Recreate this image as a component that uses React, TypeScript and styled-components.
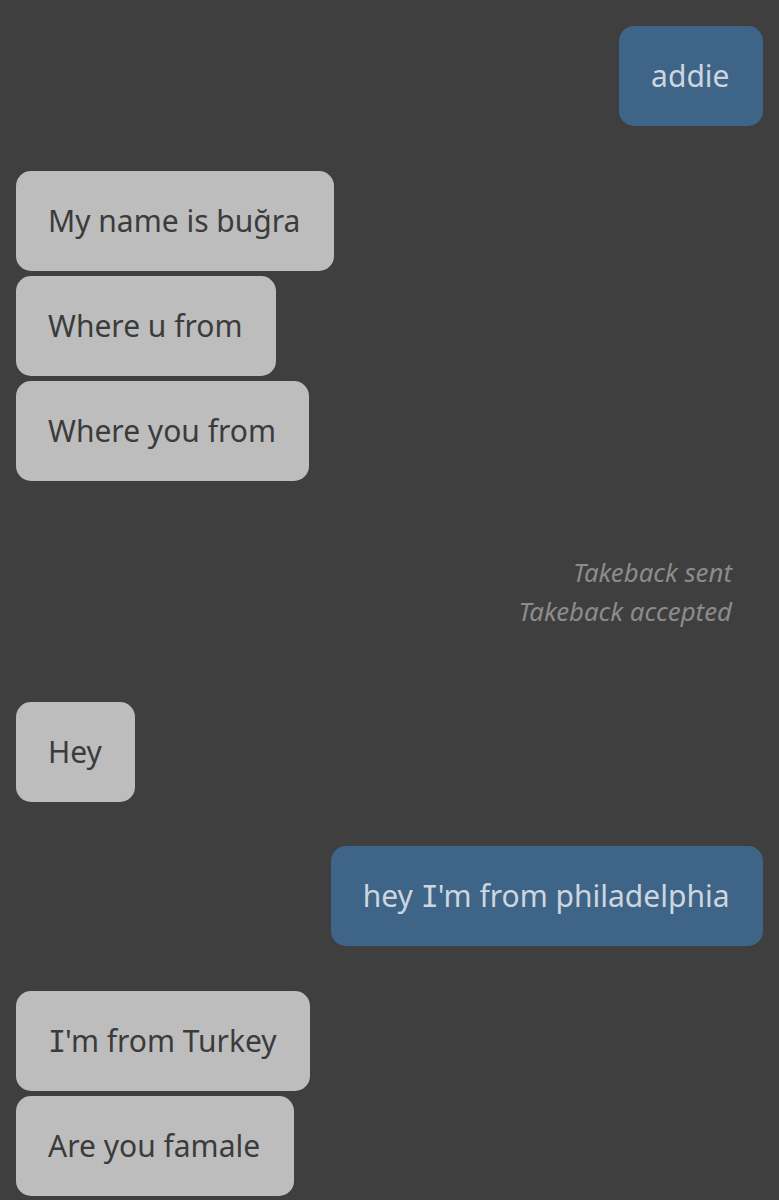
import React from "react";
import styled, { createGlobalStyle } from "styled-components";

const Global = createGlobalStyle`
  html, body {
    margin: 0;
    padding: 0;
    background: #3f3f3f;
  }
  body {
    font-family: "Noto Sans", "Open Sans", sans-serif;
  }
`;

const Page = styled.div`
  width: 779px;
  min-height: 1200px;
  box-sizing: border-box;
  background: #3f3f3f;
  padding: 26px 16px 0 16px;
  display: flex;
  flex-direction: column;
`;

const Group = styled.div<{ $mine?: boolean; $top?: number }>`
  display: flex;
  flex-direction: column;
  align-items: ${(p) => (p.$mine ? "flex-end" : "flex-start")};
  gap: 5px;
  margin-top: ${(p) => p.$top ?? 0}px;
`;

const Bubble = styled.div<{ $mine?: boolean }>`
  box-sizing: border-box;
  height: 100px;
  padding: 30px 33.5px 30px 32px;
  border-radius: 15px;
  font-size: 30px;
  line-height: 40px;
  white-space: nowrap;
  background: ${(p) => (p.$mine ? "#3e6487" : "#bdbdbd")};
  color: ${(p) => (p.$mine ? "#cdd6df" : "#3b3b3b")};
`;

/* the app's font draws a capital I with slab serifs */
const SerifI = styled.span`
  font-family: "DejaVu Sans Mono", monospace;
  letter-spacing: -1px;
`;

const System = styled.div`
  display: flex;
  flex-direction: column;
  align-items: flex-end;
  padding-right: 31px;
  margin-top: 72px;
  margin-bottom: 71px;
`;

const SystemLine = styled.div`
  font-size: 25.8px;
  line-height: 39px;
  font-style: italic;
  color: #8c8c8c;
`;

export default function App() {
  return (
    <>
      <Global />
      <Page>
        <Group $mine>
          <Bubble $mine>addie</Bubble>
        </Group>
        <Group $top={45}>
          <Bubble>My name is buğra</Bubble>
          <Bubble>Where u from</Bubble>
          <Bubble>Where you from</Bubble>
        </Group>
        <System>
          <SystemLine>Takeback sent</SystemLine>
          <SystemLine>Takeback accepted</SystemLine>
        </System>
        <Group>
          <Bubble>Hey</Bubble>
        </Group>
        <Group $mine $top={44}>
          <Bubble $mine>
            hey <SerifI>I</SerifI>'m from philadelphia
          </Bubble>
        </Group>
        <Group $top={45}>
          <Bubble>
            <SerifI>I</SerifI>'m from Turkey
          </Bubble>
          <Bubble>Are you famale</Bubble>
        </Group>
      </Page>
    </>
  );
}
